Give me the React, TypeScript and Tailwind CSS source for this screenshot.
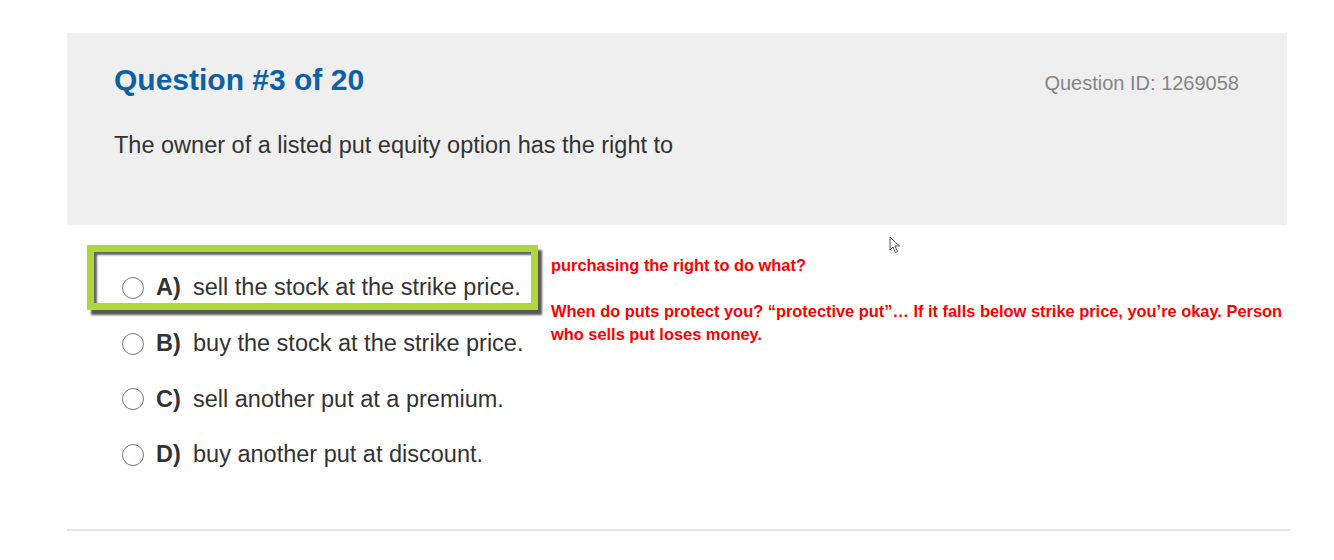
const options = [
  { key: "A)", text: "sell the stock at the strike price." },
  { key: "B)", text: "buy the stock at the strike price." },
  { key: "C)", text: "sell another put at a premium." },
  { key: "D)", text: "buy another put at discount." },
];

function Radio() {
  return (
    <span className="block h-[22px] w-[22px] shrink-0 rounded-full border-[1.5px] border-[#7a7a7a] bg-white" />
  );
}

export default function App() {
  return (
    <div className="relative h-[560px] w-[1334px] overflow-hidden bg-white font-['Liberation_Sans',Arial,sans-serif]">
      {/* question header panel */}
      <div className="px-[67px] pt-[33px]">
        <div className="h-[192px] w-[1220px] bg-[#efefef] pl-[47px] pr-[48px] pt-[29px]">
          <div className="flex items-baseline justify-between">
            <h1 className="text-[30px] font-bold leading-[36px] text-[#0d5fa6]">Question #3 of 20</h1>
            <span className="text-[20px] leading-[24px] text-[#858585]">Question ID: 1269058</span>
          </div>
          <p className="mt-[32px] text-[23.5px] leading-[30px] text-[#333333]">
            The owner of a listed put equity option has the right to
          </p>
        </div>
      </div>

      {/* answers + notes */}
      <div className="mt-[35px] flex items-start">
        <ul className="ml-[122px] flex w-[429px] flex-col">
          {options.map((o) => (
            <li key={o.key} className="flex h-[55.7px] items-center text-[23.5px] text-[#333333]">
              <Radio />
              <span className="ml-[12px] w-[37px] font-bold">{o.key}</span>
              <span>{o.text}</span>
            </li>
          ))}
        </ul>
        <div className="mt-[-6px] text-[16.4px] font-bold leading-[23px] text-[#ff0000]">
          <p>purchasing the right to do what?</p>
          <p className="mt-[23px]">
            When do puts protect you? “protective put”… If it falls below strike price, you’re okay. Person
            <br />
            who sells put loses money.
          </p>
        </div>
      </div>

      {/* highlight box around answer A */}
      <div className="pointer-events-none absolute left-[87px] top-[245px] h-[65px] w-[451px] border-[7px] border-[#afd63f] shadow-[4px_5px_2px_rgba(0,0,0,0.65),inset_3px_3px_2px_rgba(0,0,0,0.6)]" />

      {/* mouse cursor */}
      <svg className="absolute left-[889px] top-[236px]" width="12" height="18" viewBox="0 0 12 18">
        <path
          d="M1 1 L1 14 L4 11 L6.5 16.5 L8.5 15.5 L6 10 L10.5 10 Z"
          fill="white"
          stroke="#555"
          strokeWidth="1"
          strokeLinejoin="round"
        />
      </svg>

      {/* bottom rule */}
      <div className="absolute left-[67px] top-[529px] h-[2px] w-[1223px] bg-[#e6e6e6]" />
    </div>
  );
}
